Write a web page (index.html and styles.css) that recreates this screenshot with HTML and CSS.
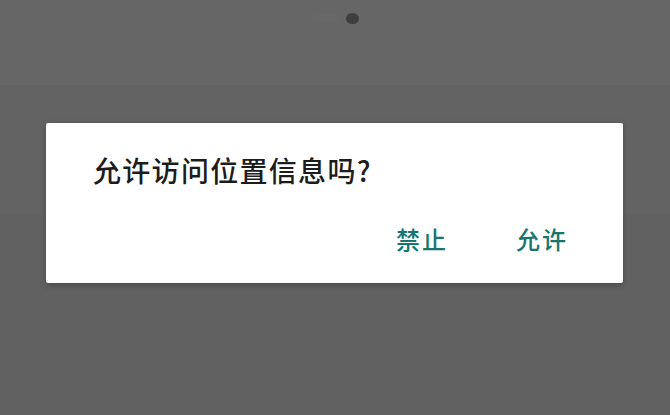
FILE: index.html
```html
<!DOCTYPE html>
<html lang="zh-CN">
<head>
<meta charset="utf-8">
<link rel="stylesheet" href="styles.css">
</head>
<body>
<div class="screen">
  <div class="pager">
    <span class="dot dot-faint"></span>
    <span class="dot dot-active"></span>
  </div>
  <div class="dialog">
    <div class="title">允许访问位置信息吗?</div>
    <div class="actions">
      <span class="btn">禁止</span>
      <span class="btn">允许</span>
    </div>
  </div>
</div>
</body>
</html>
```

FILE: styles.css
```css
html, body {
  margin: 0;
  padding: 0;
}
body {
  width: 670px;
  height: 415px;
  overflow: hidden;
  background: #636363;
  font-family: "Noto Sans CJK SC", "Noto Sans", sans-serif;
}
.screen {
  display: flex;
  flex-direction: column;
  height: 415px;
  background: linear-gradient(to bottom, #666 0, #666 85px, #636363 85px, #636363 215px, #616161 215px, #616161 100%);
}
.pager {
  display: flex;
  align-items: center;
  gap: 8px;
  padding: 12px 0 0 312px;
  height: 12px;
}
.dot {
  display: block;
  border-radius: 50%;
}
.dot-faint {
  width: 26px;
  height: 6px;
  border-radius: 3px;
  background: #686868;
}
.dot-active {
  width: 13px;
  height: 11px;
  background: #3e3e3e;
}
.dialog {
  margin: 99px 0 0 46px;
  width: 577px;
  height: 160px;
  box-sizing: border-box;
  background: #ffffff;
  border-radius: 2px;
  box-shadow: 0 2px 6px rgba(0,0,0,0.25);
  display: flex;
  flex-direction: column;
  padding: 29px 0 0 47px;
}
.title {
  font-size: 28px;
  line-height: 36px;
  font-weight: 500;
  letter-spacing: 1.3px;
  color: #1c1c1c;
}
.actions {
  display: flex;
  justify-content: flex-end;
  gap: 68px;
  margin-top: 37px;
  padding-right: 55px;
}
.btn {
  font-size: 24px;
  line-height: 28px;
  font-weight: 500;
  letter-spacing: 2px;
  color: #17756d;
}
```
